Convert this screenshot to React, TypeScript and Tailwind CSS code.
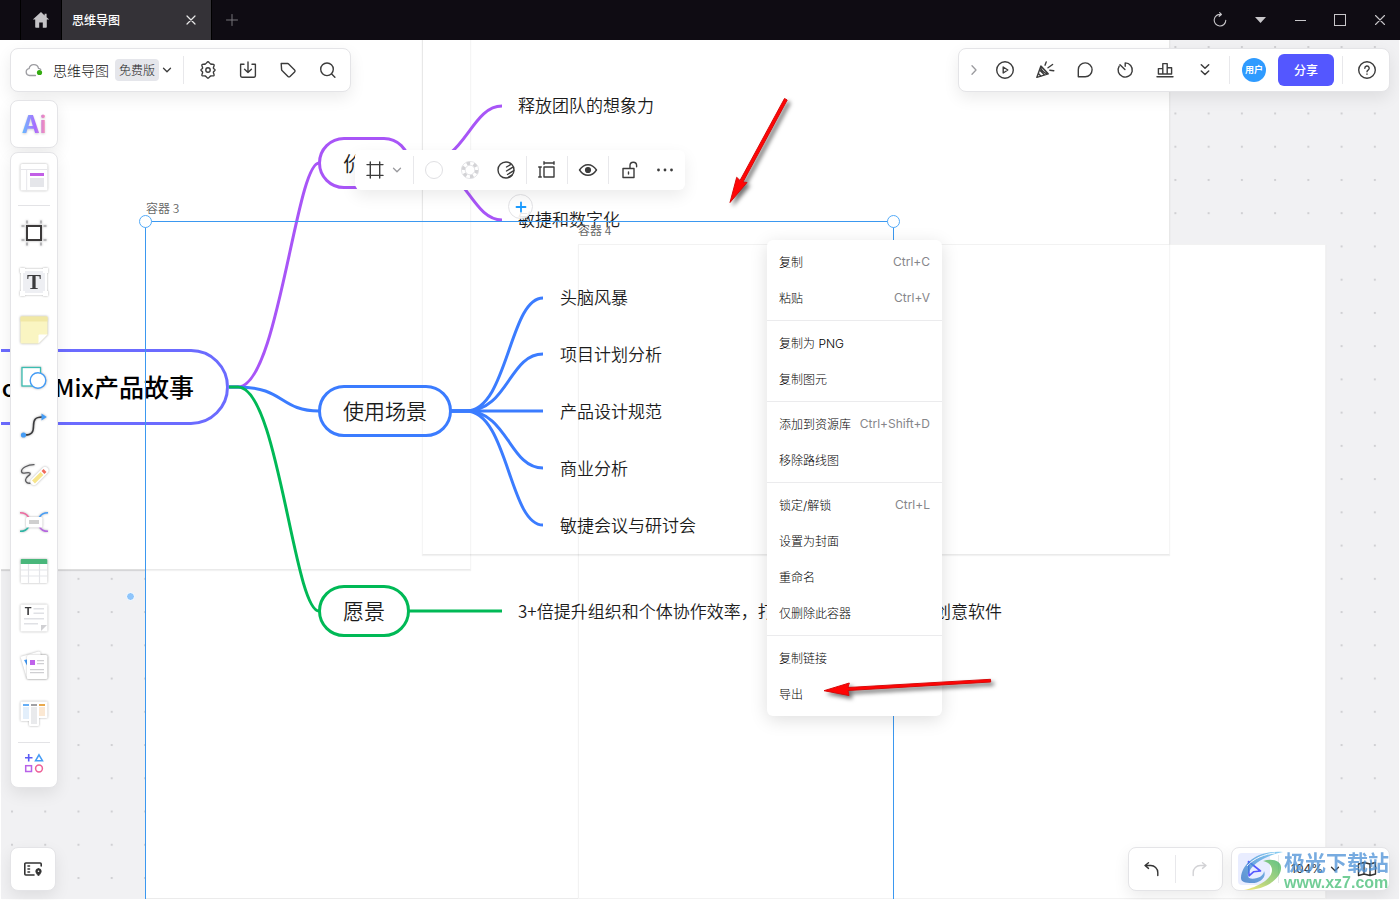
import type { ReactNode } from "react";

const SHADOW = "shadow-[0_6px_16px_rgba(0,0,0,0.08)]";

function Line({ children, size = 20, className = "", sw = 1.4 }: { children: ReactNode; size?: number; className?: string; sw?: number }) {
  return (
    <svg width={size} height={size} viewBox={`0 0 ${size} ${size}`} fill="none" stroke="currentColor" strokeWidth={sw} strokeLinecap="round" strokeLinejoin="round" className={`shrink-0 ${className}`} aria-hidden="true">
      {children}
    </svg>
  );
}

function IconButton({ label, children, className = "w-10 text-[#3c3c3c]" }: { label: string; children: ReactNode; className?: string }) {
  return (
    <button type="button" aria-label={label} className={`flex shrink-0 items-center justify-center self-stretch ${className}`}>
      {children}
    </button>
  );
}

function Divider({ className = "" }: { className?: string }) {
  return <span className={`h-7 w-px shrink-0 bg-[#e8e8eb] ${className}`} />;
}

function ChevronDown({ className = "" }: { className?: string }) {
  return (
    <Line size={10} className={className} sw={1.3}>
      <path d="M1.5 3.2 5 6.8l3.500-3.600" />
    </Line>
  );
}

/* ---------- title bar ---------- */

function TitleBar() {
  return (
    <header className="flex h-10 shrink-0 items-stretch bg-[#0f0c13] text-[#c8c7ca]">
      <button type="button" aria-label="主页" className="ml-5 flex w-[42px] items-center justify-center border-x border-black">
        <svg width="18" height="18" viewBox="0 0 18 18" fill="#c4c3c6" aria-hidden="true">
          <path d="M9 1 .8 8.600h2.400V16a.8.8 0 0 0 .8.8h3.200v-5.200h3.600v5.200H14a.8.8 0 0 0 .8-.8V8.600h2.400L14.600 6.200V2.800h-2v1.600z" />
        </svg>
      </button>
      <div className="flex w-[149px] items-center justify-between bg-[#343237] pr-3 pl-2.5">
        <span className="text-xs font-medium text-white">思维导图</span>
        <button type="button" aria-label="关闭标签" className="flex size-4 items-center justify-center text-[#e8e8e8]">
          <Line size={10} sw={1.2}>
            <path d="m1 1 8 8M9 1 1 9" />
          </Line>
        </button>
      </div>
      <button type="button" aria-label="新标签" className="flex w-10 items-center justify-center border-l border-black text-[#77757a]">
        <Line size={12} sw={1}>
          <path d="M6 .5v11M.5 6h11" />
        </Line>
      </button>
      <div className="ml-auto flex">
        <IconButton label="刷新" className="w-10">
          <Line size={16} sw={1.1}>
            <path d="M9 2.500A5.800 5.800 0 1 0 13.800 8.300M7.600 .6 9.400 2.500 7.200 4.300" />
          </Line>
        </IconButton>
        <IconButton label="更多" className="w-10">
          <svg width="11" height="6" viewBox="0 0 11 6" fill="currentColor" aria-hidden="true">
            <path d="M0 0h11L5.500 6z" />
          </svg>
        </IconButton>
        <IconButton label="最小化" className="w-10">
          <span className="h-px w-[11px] bg-[#c8c7ca]" />
        </IconButton>
        <IconButton label="最大化" className="w-10">
          <span className="size-3 border border-[#c8c7ca]" />
        </IconButton>
        <IconButton label="关闭" className="w-10">
          <Line size={10} sw={1.1}>
            <path d="m.5.5 9 9M9.500.5l-9 9" />
          </Line>
        </IconButton>
      </div>
    </header>
  );
}

/* ---------- canvas ---------- */

const topics = [
  { text: "释放团队的想象力", pos: "left-[518px] top-[53px]" },
  { text: "敏捷和数字化", pos: "left-[518px] top-[167px]" },
  { text: "头脑风暴", pos: "left-[560px] top-[245px]" },
  { text: "项目计划分析", pos: "left-[560px] top-[302px]" },
  { text: "产品设计规范", pos: "left-[560px] top-[359px]" },
  { text: "商业分析", pos: "left-[560px] top-[416px]" },
  { text: "敏捷会议与研讨会", pos: "left-[560px] top-[473px]" },
];

const branches = [
  { text: "价值", box: "left-[318px] top-[97px] w-[92px] border-[#a855f7]" },
  { text: "使用场景", box: "left-[318px] top-[345px] w-[134px] border-[#3b7cff]" },
  { text: "愿景", box: "left-[318px] top-[545px] w-[92px] border-[#00b956]" },
];

const edges = [
  { color: "#a855f7", d: "M229 387H238C278 387 296 163 319 163" },
  { color: "#a855f7", d: "M409 163H424C465 163 471 106 502 106" },
  { color: "#a855f7", d: "M409 163H424C465 163 471 220 502 220" },
  { color: "#3b7cff", d: "M229 387H238C284 387 280 411 319 411" },
  { color: "#3b7cff", d: "M451 411H466C508 411 509 298 543 298" },
  { color: "#3b7cff", d: "M451 411H466C508 411 509 354 543 354" },
  { color: "#3b7cff", d: "M451 411H543" },
  { color: "#3b7cff", d: "M451 411H466C508 411 509 468 543 468" },
  { color: "#3b7cff", d: "M451 411H466C508 411 509 525 543 525" },
  { color: "#00b956", d: "M229 387H238C278 387 294 611 319 611" },
  { color: "#00b956", d: "M409 611H502" },
];

function Canvas() {
  const frame = "absolute border border-black/5 bg-white shadow-[0_1px_1px_rgba(0,0,0,0.06)]";
  const outline = "absolute border border-black/4 border-b-black/8 shadow-[0_1px_1px_rgba(0,0,0,0.05)]";
  return (
    <div className="absolute inset-0 overflow-hidden bg-[#f1f1f3]">
      <svg className="absolute inset-0 size-full" aria-hidden="true">
        <defs>
          <pattern id="dots" x="11" y="6" width="33.240" height="33.240" patternUnits="userSpaceOnUse">
            <rect width="2" height="2" fill="#d0d0d3" />
          </pattern>
        </defs>
        <rect width="100%" height="100%" fill="url(#dots)" />
      </svg>

      <div className={`${frame} -left-5 -top-5 h-[550px] w-[491px]`} />
      <div className={`${frame} -top-5 left-[422px] h-[535px] w-[748px]`} />
      <div className="absolute top-[181px] left-[145px] h-[678px] w-[749px] border-b border-black/8 bg-white" />
      <div className={`${frame} top-[204px] left-[578px] h-[655px] w-[748px]`} />
      <div className={`${outline} -left-5 -top-5 h-[550px] w-[491px]`} />
      <div className={`${outline} -top-5 left-[422px] h-[535px] w-[748px]`} />

      <svg className="absolute top-0 left-0 overflow-visible" width="1" height="1" aria-hidden="true">
        <g transform="translate(0 -40)" fill="none" strokeWidth="3">
          {edges.map((e) => (
            <path key={e.d} d={e.d} stroke={e.color} />
          ))}
        </g>
      </svg>

      <div className="absolute top-[309px] -left-[60px] flex h-[76px] w-[289px] items-center justify-end rounded-[38px] border-3 border-[#6b6bff] pr-8 font-medium whitespace-nowrap text-black">
        <span className="text-[25px]"><span className="text-2xl">BoardMix</span>产品故事</span>
      </div>
      {branches.map((b) => (
        <div key={b.text} className={`absolute flex h-[52px] items-center justify-center rounded-[26px] border-3 text-[21px] font-[350] text-[#1c1c1c] ${b.box}`}>
          {b.text}
        </div>
      ))}

      {topics.map((t) => (
        <div key={t.text} className={`absolute text-[17px]/6 font-[350] whitespace-nowrap text-[#1c1c1c] ${t.pos}`}>
          {t.text}
        </div>
      ))}
      <div className="absolute top-[559px] left-[518px] flex w-[484px] justify-between text-[17px]/6 font-[350] whitespace-nowrap text-[#1c1c1c]">
        <span>3+倍提升组织和个体协作效率，打</span>
        <span>创意软件</span>
      </div>

      <button type="button" aria-label="添加" className="absolute top-[154px] left-[508px] flex size-[25px] items-center justify-center rounded-full border border-[#e3e3e6] bg-white/90 text-[#1a9bff]">
        <Line size={12} sw={1.800}>
          <path d="M6 1.500v9M1.500 6h9" />
        </Line>
      </button>

      <div className="absolute top-[181px] left-[145px] h-[740px] w-[749px] border border-[#3b98f0]" />
      <span className="absolute top-[175px] left-[139px] size-[13px] rounded-full border-[1.5px] border-[#53aaf8] bg-white" />
      <span className="absolute top-[175px] left-[887px] size-[13px] rounded-full border-[1.5px] border-[#53aaf8] bg-white" />
      <span className="absolute top-[160px] left-[146px] text-xs/4 font-[350] text-[#666]">容器 3</span>
      <span className="absolute top-[182px] left-[578px] text-xs/4 font-[350] text-[#666]">容器 4</span>
      <span className="absolute top-[552px] left-[126px] size-[9px] rounded-full border border-white bg-[#8ec5fb]" />
      <span className="pointer-events-none absolute inset-0 border-x border-b border-white" />
    </div>
  );
}

/* ---------- top bars ---------- */

function FileBar() {
  return (
    <div className={`absolute top-2 left-2.5 flex h-11 items-center rounded-lg border border-[#e4e4e7] bg-white pr-0.5 pl-3.5 ${SHADOW}`}>
      <svg width="18" height="16" viewBox="0 0 18 16" fill="none" aria-hidden="true">
        <path d="M10.500 13.500H4.600a3.500 3.500 0 0 1-.5-6.950A4.800 4.800 0 0 1 13.500 6.300c1 .2 1.700.6 2.200 1.200" stroke="#9c9ca1" strokeWidth="1.300" strokeLinecap="round" />
        <circle cx="14.500" cy="10.500" r="2.600" fill="#35ab12" />
      </svg>
      <span className="ml-2.5 text-sm/5 font-light text-[#111]">思维导图</span>
      <span className="ml-1.5 flex h-[22px] items-center rounded bg-[#e5e6eb] px-1 text-xs font-light text-[#222]">免费版</span>
      <button type="button" aria-label="文件菜单" className="ml-[3px] text-[#3c3c3c]">
        <ChevronDown />
      </button>
      <Divider className="mr-1 ml-[11px]" />
      <IconButton label="设置">
        <Line>
          <path d="M10 1.800c1 0 1.600 1.700 2.700 2.200s2.700-.2 3.300.6c.7.900-.7 2.300-.6 3.500.1.700 1.700 1.100 1.700 2s-1.600 1.200-1.700 2c-.2 1.200 1.200 2.500.6 3.400-.6.800-2.200 0-3.300.5S11 18.200 10 18.200 8.400 16.500 7.300 16s-2.700.3-3.300-.5c-.6-.9.8-2.200.6-3.400-.1-.800-1.700-1.100-1.700-2s1.600-1.300 1.700-2c.1-1.200-1.300-2.600-.6-3.500.6-.8 2.200-.1 3.300-.6S9 1.800 10 1.800z" />
          <circle cx="10" cy="10" r="2.200" />
        </Line>
      </IconButton>
      <IconButton label="导入">
        <Line>
          <path d="M6 4.200H2.600v11.600a1.400 1.400 0 0 0 1.400 1.400h12a1.400 1.400 0 0 0 1.400-1.400V4.200H14M10 2v10.500M6.600 9.200l3.400 3.400 3.400-3.400" />
        </Line>
      </IconButton>
      <IconButton label="标签">
        <Line>
          <path d="M3.200 3.500h6.400a1.400 1.400 0 0 1 1 .4l6 6a1.400 1.400 0 0 1 0 2l-4.600 4.600a1.400 1.400 0 0 1-2 0l-6-6a1.400 1.400 0 0 1-.4-.9z" />
        </Line>
      </IconButton>
      <IconButton label="搜索">
        <Line>
          <circle cx="9" cy="9.300" r="6.300" />
          <path d="m13.700 14 3.200 3.200" />
        </Line>
      </IconButton>
    </div>
  );
}

function ShareBar() {
  return (
    <div className={`absolute top-2 right-2.5 flex h-11 items-center rounded-lg border border-[#e4e4e7] bg-white pr-0.5 ${SHADOW}`}>
      <IconButton label="收起" className="w-[26px] pl-1 text-[#9a9a9e]">
        <Line size={10} sw={1.300}>
          <path d="M3 .8 7 5 3 9.200" />
        </Line>
      </IconButton>
      <IconButton label="演示">
        <Line>
          <circle cx="10" cy="10" r="8.300" />
          <path d="M8.200 7v6l4.600-3z" />
        </Line>
      </IconButton>
      <IconButton label="庆祝">
        <Line>
          <path d="M5.800 6.200 1.800 17.400l11.400-3.600zM5.800 6.200c-.8 1 .2 3.600 2.600 5.600s4.200 2.400 4.800 2M4.600 10l4.800 4.800M3.400 13.600l2.600 2.600M10 5.200l1.200-3.200M13 7.800l4.600-3.300M14.800 10.200l4 .5M6.200 6.200l7 7.600" />
        </Line>
      </IconButton>
      <IconButton label="评论">
        <Line>
          <path d="M3.300 16.700V9.700a6.900 6.900 0 1 1 6.900 7z" />
        </Line>
      </IconButton>
      <IconButton label="计时器">
        <Line>
          <path d="M10.200 2.900v3.300M10.200 2.900a7.100 7.100 0 1 1-6 3.300M5 4.800l4.900 4.700" />
        </Line>
      </IconButton>
      <IconButton label="投票">
        <Line>
          <path d="M2 16.800h16M3.400 14V8.600h4.400M3.400 14h13.200V7.800h-4.400M7.800 14V3.600h4.400V14" />
        </Line>
      </IconButton>
      <IconButton label="更多工具">
        <Line sw={1.500}>
          <path d="m6.300 4.800 3.700 3.500 3.700-3.500M6.300 11l3.700 3.500 3.700-3.500" />
        </Line>
      </IconButton>
      <Divider className="ml-1" />
      <span className="ml-3 flex size-6 items-center justify-center rounded-full bg-[#2f9bff] text-[9px] font-bold text-white">用户</span>
      <button type="button" className="ml-3 h-8 w-14 rounded-md bg-[#5457ff] text-xs font-medium text-white">分享</button>
      <Divider className="mr-1 ml-2" />
      <IconButton label="帮助">
        <Line>
          <circle cx="10" cy="10" r="8.300" />
          <path d="M7.800 8.200a2.200 2.200 0 1 1 3.300 1.900c-.8.5-1.100.9-1.100 1.700M10 14v.2" />
        </Line>
      </IconButton>
    </div>
  );
}

/* ---------- left tools ---------- */

const tools: { label: string; art: ReactNode }[] = [
  {
    label: "容器",
    art: (
      <>
        <path d="M9 2.500v3M23 2.500v3M9 24.500v3M23 24.500v3M3.500 8h3M3.500 22h3M25.500 8h3M25.500 22h3" stroke="#a9a9ac" strokeWidth="1.600" />
        <rect x="9" y="8" width="14" height="14" fill="#fff" stroke="#3b3939" strokeWidth="2" />
      </>
    ),
  },
  {
    label: "文本",
    art: (
      <>
        <rect x="4" y="4" width="24" height="24" fill="#eeeff3" stroke="#fff" strokeWidth="2" />
        <path d="M2 2h5v5H2zM25 2h5v5h-5zM2 25h5v5H2zM25 25h5v5h-5z" fill="#fff" />
        <text x="16" y="23" textAnchor="middle" fontFamily="Liberation Serif, serif" fontWeight="700" fontSize="21" fill="#3b3b3d">T</text>
      </>
    ),
  },
  {
    label: "便签",
    art: (
      <>
        <path d="M2.500 3.500a1 1 0 0 1 1-1h25a1 1 0 0 1 1 1V20.500l-9 9h-17a1 1 0 0 1-1-1z" fill="#faf5c2" />
        <path d="M2.500 7.500v-4a1 1 0 0 1 1-1h25a1 1 0 0 1 1 1v4z" fill="#f1e8a5" />
        <path d="M20.500 29.500v-8a1 1 0 0 1 1-1h8z" fill="#fff" />
      </>
    ),
  },
  {
    label: "形状",
    art: (
      <>
        <rect x="4" y="5.500" width="18.500" height="18.500" fill="#fff" stroke="#3bbdb1" strokeWidth="1.300" />
        <circle cx="20" cy="18.500" r="7.800" fill="#fff" stroke="#459cf5" strokeWidth="1.400" />
      </>
    ),
  },
  {
    label: "连线",
    art: (
      <>
        <path d="M5 25h2c7 0 8.500-3 8.500-9S17 7 24 7" fill="none" stroke="#3b3b3d" strokeWidth="1.600" />
        <circle cx="5.500" cy="25" r="2.600" fill="#459cf5" />
        <path d="M23.500 3.600 28.800 7l-5.300 3.400z" fill="#459cf5" />
      </>
    ),
  },
  {
    label: "画笔",
    art: (
      <>
        <path d="M16.500 6.700C10 6.500 3 10 3.500 13.700c.5 3.300 6.500-.2 8.300 1.300 2 2-4.400 3-4.300 7 .1 2.400 2 3.500 5 3.200" fill="none" stroke="#5b5b5e" strokeWidth="1.300" />
        <path d="M16 23.500 27 12.500" stroke="#fff" strokeWidth="7" strokeLinecap="round" />
        <path d="m13.500 25.500 1-3.500 3 2.800z" fill="#fff" />
        <path d="M15.500 24 24 15.500" stroke="#f7e58c" strokeWidth="4" />
        <path d="m25 14.500 2-2" stroke="#f06b5b" strokeWidth="4" />
      </>
    ),
  },
  {
    label: "思维导图",
    art: (
      <>
        <path d="M2 6.700c4.500 0 7 1.500 8.500 4.500" fill="none" stroke="#ee6aa0" strokeWidth="1.600" />
        <path d="M30 6.700c-4.500 0-7 1.500-8.500 4.500" fill="none" stroke="#459cf5" strokeWidth="1.600" />
        <path d="M2 25.300c4.500 0 7-1.500 8.500-4.500" fill="none" stroke="#2fb5a5" strokeWidth="1.600" />
        <path d="M30 25.300c-4.500 0-7-1.500-8.500-4.500" fill="none" stroke="#b565e0" strokeWidth="1.600" />
        <rect x="8" y="11" width="16.500" height="10.500" rx="1.500" fill="#fff" />
        <rect x="11" y="14" width="10" height="4" fill="#cfcfcf" />
      </>
    ),
  },
  {
    label: "表格",
    art: (
      <>
        <rect x="2.700" y="5" width="26.600" height="24" rx="1" fill="#fff" />
        <path d="M2.700 10V6a1 1 0 0 1 1-1h24.600a1 1 0 0 1 1 1v4z" fill="#49b77b" />
        <path d="M10.500 10v19M21.500 10v19M2.700 16h26.600M2.700 22h26.600" stroke="#e4e5e9" strokeWidth="1.200" />
      </>
    ),
  },
  {
    label: "文档",
    art: (
      <>
        <rect x="2.500" y="2.500" width="27" height="27" rx="1" fill="#fff" />
        <text x="10" y="13.200" textAnchor="middle" fontFamily="Liberation Sans, sans-serif" fontWeight="700" fontSize="11" fill="#3b3b3d">T</text>
        <path d="M15.500 6.700H26M15.500 11.200H26M6 16.700h20M6 21.700h14" stroke="#e0e1e5" strokeWidth="1.500" />
        <path d="M23 29v-6h6z" fill="#d0d0d3" />
      </>
    ),
  },
  {
    label: "卡片",
    art: (
      <>
        <path d="m2.500 6.700 18-5.200 2 .8L24 26 9 29z" fill="#fff" />
        <path d="m6 10 3-.5v6z" fill="#459cf5" />
        <g className="drop-shadow-[0_0_1px_rgba(0,0,0,0.25)]">
          <rect x="9" y="5" width="20.500" height="24" rx="1.500" fill="#fff" />
        </g>
        <rect x="12" y="10" width="5" height="5" fill="#bf63ea" />
        <path d="M19 10.700h7M19 13.700h7M12 19.700h14M12 22.700h14" stroke="#cfcfd2" strokeWidth="1.200" />
      </>
    ),
  },
  {
    label: "看板",
    art: (
      <>
        <path d="M2.500 4.500a1 1 0 0 1 1-1h25a1 1 0 0 1 1 1V19a1 1 0 0 1-1 1H21v7a1 1 0 0 1-1 1h-8a1 1 0 0 1-1-1v-4H3.500a1 1 0 0 1-1-1z" fill="#fff" />
        <path d="M5 6h6v2H5z" fill="#66aef5" />
        <path d="M13 6h6v2h-6z" fill="#a1a1a4" />
        <path d="M21 6h6v2h-6z" fill="#e9a94c" />
        <path d="M5 9h6v12H5z" fill="#e3effb" />
        <path d="M13 9h6v17h-6z" fill="#e9eaec" />
        <path d="M21 9h6v9h-6z" fill="#fbe8d3" />
      </>
    ),
  },
];

function ToolArt({ children, lifted = true }: { children: ReactNode; lifted?: boolean }) {
  return (
    <svg width="32" height="32" viewBox="0 0 32 32" aria-hidden="true" className={lifted ? "overflow-visible drop-shadow-[0_0_1px_rgba(0,0,0,0.32)]" : ""}>
      {children}
    </svg>
  );
}

function SideTools() {
  return (
    <aside className="absolute top-15 left-2.5 flex w-12 flex-col gap-1">
      <button type="button" className={`flex h-12 items-center justify-center rounded-lg border border-[#e4e4e7] bg-white pt-0.5 ${SHADOW}`}>
        <span className="bg-linear-to-r from-[#5bbcff] via-[#a66bff] via-55% to-[#ff8fb0] bg-clip-text font-[Inter,sans-serif] text-2xl/7 font-bold text-transparent drop-shadow-[0_1px_1px_rgba(0,0,0,0.18)]">Ai</span>
      </button>
      <div className={`flex flex-col items-center rounded-lg border border-[#e4e4e7] bg-white ${SHADOW}`}>
        <IconButton label="模板" className="h-12">
          <ToolArt>
            <rect x="2.500" y="3" width="27" height="26.500" rx="1.500" fill="#fff" />
            <path d="M2.500 8.500h27M8.700 8.500v21" stroke="#e6e6ea" strokeWidth="1" />
            <path d="M12 12h14v3H12z" fill="#c25fe6" />
            <path d="M12 17h14v9H12z" fill="#e5e6ea" />
          </ToolArt>
        </IconButton>
        <span className="my-1 h-px w-8 bg-[#e3e3e6]" />
        {tools.map((t) => (
          <IconButton key={t.label} label={t.label} className="h-12">
            <ToolArt>{t.art}</ToolArt>
          </IconButton>
        ))}
        <span className="mt-1 h-px w-8 bg-[#e3e3e6]" />
        <IconButton label="更多应用" className="h-11 pb-1">
          <ToolArt lifted={false}>
            <path d="M10.700 7v7.500M7 10.700h7.500" stroke="#5b5bf5" strokeWidth="1.600" />
            <path d="m21 7.800 3.500 6h-7z" fill="none" stroke="#459cf5" strokeWidth="1.500" />
            <rect x="7.700" y="18.700" width="5.800" height="5.800" fill="none" stroke="#b862e8" strokeWidth="1.500" />
            <circle cx="21" cy="21.500" r="3.400" fill="none" stroke="#ee5f98" strokeWidth="1.500" />
          </ToolArt>
        </IconButton>
      </div>
    </aside>
  );
}

/* ---------- floating object bar ---------- */

function ObjectBar() {
  return (
    <div className={`absolute top-[110px] left-[355px] flex h-10 items-center rounded-md bg-white text-[#3c3c3c] ${SHADOW}`}>
      <IconButton label="容器类型" className="w-[58px] gap-[7px] pr-px">
        <Line>
          <path d="M5.300 2v16M14.700 2v16M2 4.600h16M2 15.400h16" />
        </Line>
        <ChevronDown className="text-[#9a9a9e]" />
      </IconButton>
      <Divider />
      <IconButton label="填充" className="ml-0.5 w-9">
        <span className="size-[18px] rounded-full border border-[#e0e0e3]" />
      </IconButton>
      <IconButton label="边框" className="w-9">
        <svg width="18" height="18" viewBox="0 0 18 18" fill="none" aria-hidden="true">
          <circle cx="9" cy="9" r="6.800" stroke="#d3d3d6" strokeWidth="3.600" strokeDasharray="3.560 3.560" />
          <circle cx="9" cy="9" r="8.600" stroke="#e0e0e3" strokeWidth=".8" />
          <circle cx="9" cy="9" r="4.800" stroke="#dcdcdf" strokeWidth=".8" />
        </svg>
      </IconButton>
      <IconButton label="风格" className="w-9">
        <Line>
          <circle cx="10" cy="10" r="8" />
          <path d="m10.500 7 4-2.300M10.500 11l6-3.600M11.500 14.500l6.300-3.900M12.500 17.200l3.800-2.400" />
        </Line>
      </IconButton>
      <Divider className="ml-0.5" />
      <IconButton label="尺寸">
        <Line>
          <path d="M7 7h10v10H7zM7 3h10M7 1.700v2.600M17 1.700v2.600M3 7v10M1.700 7h2.600M1.700 17h2.600" />
        </Line>
      </IconButton>
      <Divider />
      <IconButton label="可见">
        <Line>
          <path d="M1.500 10c4.700-7 12.300-7 17 0-4.700 7-12.300 7-17 0z" />
          <circle cx="10" cy="10" r="2.400" fill="currentColor" />
        </Line>
      </IconButton>
      <Divider />
      <IconButton label="解锁">
        <Line>
          <path d="M4 8.500h11v9H4zM9.500 12v2M11 8.500v-3a3.300 3.300 0 0 1 6.600 0v1.300" />
        </Line>
      </IconButton>
      <IconButton label="更多操作" className="mr-1 w-8">
        <svg width="16" height="4" viewBox="0 0 16 4" fill="currentColor" aria-hidden="true">
          <circle cx="1.500" cy="2" r="1.400" />
          <circle cx="8" cy="2" r="1.400" />
          <circle cx="14.500" cy="2" r="1.400" />
        </svg>
      </IconButton>
    </div>
  );
}

/* ---------- context menu ---------- */

const menu: { text: string; keys?: string }[][] = [
  [{ text: "复制", keys: "Ctrl+C" }, { text: "粘贴", keys: "Ctrl+V" }],
  [{ text: "复制为 PNG" }, { text: "复制图元" }],
  [{ text: "添加到资源库", keys: "Ctrl+Shift+D" }, { text: "移除路线图" }],
  [{ text: "锁定/解锁", keys: "Ctrl+L" }, { text: "设置为封面" }, { text: "重命名" }, { text: "仅删除此容器" }],
  [{ text: "复制链接" }, { text: "导出" }],
];

function ContextMenu() {
  return (
    <div role="menu" className="absolute top-[200px] left-[767px] w-[175px] divide-y divide-[#ebebed] rounded-md bg-white font-[Inter,'Noto_Sans_CJK_SC',sans-serif] shadow-[0_4px_18px_rgba(0,0,0,0.13)]">
      {menu.map((group) => (
        <div key={group[0].text} className="py-1">
          {group.map((item) => (
            <button key={item.text} type="button" role="menuitem" className="flex h-9 w-full items-center justify-between px-3 text-xs whitespace-nowrap">
              <span className="pt-0.5 font-light text-black">{item.text}</span>
              {item.keys && <span className="text-[#86868a]">{item.keys}</span>}
            </button>
          ))}
        </div>
      ))}
    </div>
  );
}

/* ---------- bottom bars ---------- */

function BottomBars() {
  const bar = `flex h-11 items-center rounded-lg border border-[#e4e4e7] bg-white ${SHADOW}`;
  return (
    <>
      <div className={`absolute bottom-[9px] left-2.5 ${bar}`}>
        <IconButton label="大纲" className="w-11 text-[#333]">
          <Line sw={1.600}>
            <path d="M11 16H2.800a1 1 0 0 1-1-1V5a1 1 0 0 1 1-1h14.400a1 1 0 0 1 1 1v2M5 7h1.500M5 10h1.500M5 13h1.500" />
            <path d="M15.500 9.500a2.800 2.800 0 0 0-2.800 2.800c0 2 2.800 4.700 2.800 4.700s2.800-2.700 2.800-4.700a2.800 2.800 0 0 0-2.800-2.800z" fill="currentColor" strokeWidth=".6" />
            <circle cx="15.500" cy="12.300" r=".8" fill="#fff" stroke="none" />
          </Line>
        </IconButton>
      </div>
      <div className="absolute right-2.5 bottom-[9px] flex gap-2">
        <div className={bar}>
          <IconButton label="撤销" className="w-[46px] text-[#333]">
            <Line>
              <path d="M6.500 3.800 3 6.500l3.500 2.900M3 6.500h5.500a7 7 0 0 1 7.300 7v3" />
            </Line>
          </IconButton>
          <Divider />
          <IconButton label="重做" className="w-[46px] text-[#d2d2d5]">
            <Line>
              <path d="M13.500 3.800 17 6.500l-3.500 2.900M17 6.500h-5.500a7 7 0 0 0-7.300 7v3" />
            </Line>
          </IconButton>
        </div>
        <div className={`${bar} pr-0.5 pl-1.5`}>
          <button type="button" aria-label="选择" className="flex size-8 items-center justify-center rounded bg-[#e9edff] text-[#5457ff]">
            <Line sw={1.600}>
              <path d="M4.500 2.500 16.500 12l-7 .8-4.500 4z" />
            </Line>
          </button>
          <Divider className="ml-2" />
          <button type="button" className="ml-3 flex items-center gap-[7px] font-[Inter,sans-serif] text-xs text-[#333]">
            <span>104%</span>
            <ChevronDown />
          </button>
          <IconButton label="地图" className="ml-[7px] w-10 text-[#333]">
            <Line>
              <path d="m1.500 5 5.500-1.500 6 1.500 5.500-1.500V15L13 16.500 7 15l-5.500 1.500zM7 3.500V15M13 5v11.500" />
            </Line>
          </IconButton>
        </div>
      </div>
    </>
  );
}

function Watermark() {
  return (
    <div className="pointer-events-none absolute right-2.5 bottom-[7px] flex items-center opacity-75">
      <svg width="44" height="44" viewBox="0 0 44 44" aria-hidden="true">
        <defs>
          <linearGradient id="sky" x1="0" y1="1" x2="1" y2="0">
            <stop offset="0" stopColor="#2e6fc0" />
            <stop offset="1" stopColor="#62c0f0" />
          </linearGradient>
          <linearGradient id="leaf" x1="0" y1="1" x2="1" y2="0">
            <stop offset="0" stopColor="#f0e050" />
            <stop offset="1" stopColor="#2fae5c" />
          </linearGradient>
        </defs>
        <path d="M1 29C2 14 18 1 43 3 28 6 12 14 8 25c-1 4 3 6 9 4 4-1 7-4 7-7 3 6-4 12-12 12C5 34 1 33 1 29z" fill="url(#sky)" />
        <path d="M23 12c10-3 19 0 18 8C40 31 23 42 4 41c14-3 28-11 28-20 0-5-4-8-9-9z" fill="url(#leaf)" />
        <path d="M7 17C14 9 25 5 35 4" stroke="#fff" strokeWidth="1" fill="none" />
      </svg>
      <div className="w-[106px] whitespace-nowrap">
        <div className="text-[21px]/6 font-bold text-[#4a90d6]">极光下载站</div>
        <div className="font-[Liberation_Sans,sans-serif] text-base/5 font-bold text-[#43bd74]">www.xz7.com</div>
      </div>
    </div>
  );
}

function Arrows() {
  return (
    <svg className="pointer-events-none absolute top-0 left-0 overflow-visible drop-shadow-[3px_3px_2px_rgba(0,0,0,0.55)]" width="1" height="1" aria-hidden="true">
      <g transform="translate(0 -40)" fill="#ff0505" stroke="#d80a0a" strokeWidth="1">
        <path d="M730 202.500 736.700 177.300 740 180.500 784.500 98.500 787.200 100 743 182 747 182.500z" />
        <path d="M824 690.700 849.300 683 848 687.500 990.500 679.300 990.700 682 848 690.500 849 695.500z" />
      </g>
    </svg>
  );
}

export default function App() {
  return (
    <div className="flex h-screen flex-col overflow-hidden bg-white font-['Noto_Sans_CJK_SC',sans-serif]">
      <TitleBar />
      <main className="relative min-h-0 flex-1">
        <Canvas />
        <ObjectBar />
        <FileBar />
        <ShareBar />
        <SideTools />
        <BottomBars />
        <ContextMenu />
        <Arrows />
        <Watermark />
      </main>
    </div>
  );
}
